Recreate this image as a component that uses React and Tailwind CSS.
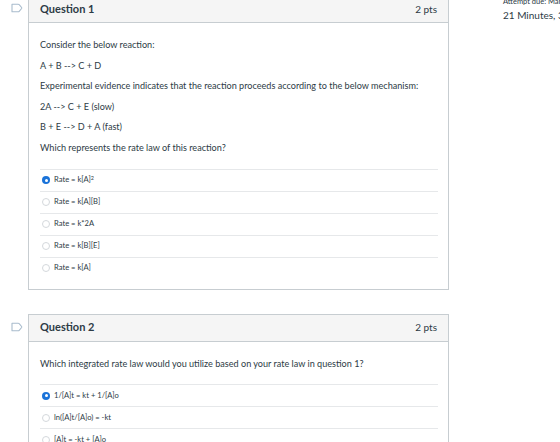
import React from "react";

const FlagIcon = () => (
  <svg width="12" height="10" viewBox="0 0 12 10" fill="none">
    <path
      d="M1 1.2 H7.2 Q7.8 1.2 8.2 1.7 L10.6 4.5 Q11 5 10.6 5.5 L8.2 8.3 Q7.8 8.8 7.2 8.8 H1 Z"
      stroke="#a9bccd"
      strokeWidth="1.1"
      strokeLinejoin="round"
    />
  </svg>
);

const Radio = ({ checked }) =>
  checked ? (
    <span className="flex h-[8px] w-[8px] shrink-0 items-center justify-center rounded-full bg-[#1a73d9]">
      <span className="h-[3px] w-[3px] rounded-full bg-white" />
    </span>
  ) : (
    <span className="h-[8px] w-[8px] shrink-0 rounded-full border border-[#d4d8dc] bg-white" />
  );

const Question = ({ title, points, paragraphs, options, selected, className = "" }) => (
  <div className={`flex ${className}`}>
    <div className="w-[28px] shrink-0 pl-[11px] pt-[8px]">
      <FlagIcon />
    </div>
    <div className="w-[421px] border border-[#c7cdd1] bg-white">
      <div className="flex h-[27px] items-center justify-between border-b border-[#c7cdd1] bg-[#f5f5f5] px-[11px]">
        <span className="text-[11px] font-bold text-[#2d3b45]">{title}</span>
        <span className="text-[10px] text-[#2d3b45]">{points}</span>
      </div>
      <div className="px-[11px] pb-[10px] pt-[12px]">
        {paragraphs.map((p, i) => (
          <p key={i} className="text-[9.1px] leading-[20.6px] text-[#2d3b45]">
            {p}
          </p>
        ))}
        <div className="mt-[10px] mr-[-1px]">
          {options.map((o, i) => (
            <div
              key={i}
              className="flex h-[22px] items-center gap-[4px] border-t border-[#e6e8ea] pl-[2px]"
            >
              <Radio checked={i === selected} />
              <span className="text-[7.6px] text-[#2d3b45]">{o}</span>
            </div>
          ))}
        </div>
      </div>
    </div>
  </div>
);

export default function App() {
  return (
    <div className="relative h-[442px] w-[560px] overflow-hidden bg-white font-['Lato','Noto_Sans',sans-serif]">
      <div className="flex">
        <div className="mt-[-5px] w-[449px] shrink-0">
          <Question
            title="Question 1"
            points="2 pts"
            paragraphs={[
              "Consider the below reaction:",
              "A + B --> C + D",
              "Experimental evidence indicates that the reaction proceeds according to the below mechanism:",
              "2A --> C + E (slow)",
              "B + E --> D + A (fast)",
              "Which represents the rate law of this reaction?",
            ]}
            options={[
              <>
                Rate = k[A]<sup className="text-[5.5px]">2</sup>
              </>,
              "Rate = k[A][B]",
              "Rate = k*2A",
              "Rate = k[B][E]",
              "Rate = k[A]",
            ]}
            selected={0}
          />
          <Question
            className="mt-[24px]"
            title="Question 2"
            points="2 pts"
            paragraphs={[
              "Which integrated rate law would you utilize based on your rate law in question 1?",
            ]}
            options={[
              "1/[A]t = kt + 1/[A]o",
              "ln([A]t/[A]o) = -kt",
              "[A]t = -kt + [A]o",
            ]}
            selected={0}
          />
        </div>
        <div className="ml-[54px] mt-[-3px] whitespace-nowrap text-[#2d3b45]">
          <div className="text-[7.5px] leading-[10px]">Attempt due: Mar 3 at 11:59pm</div>
          <div className="mt-[2px] text-[10px] leading-[12px]">21 Minutes, 33 Seconds</div>
        </div>
      </div>
    </div>
  );
}
